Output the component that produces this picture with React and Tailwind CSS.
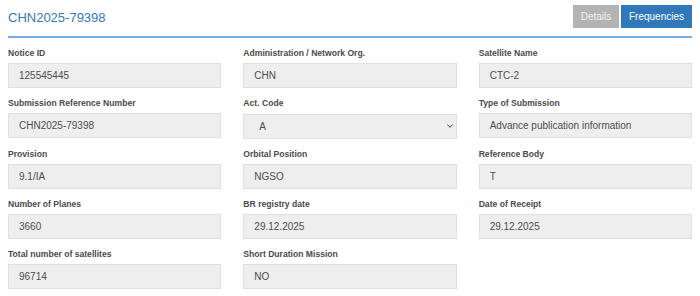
import { ChevronDown } from "lucide-react";

const fields = [
  { label: "Notice ID", value: "125545445" },
  { label: "Administration / Network Org.", value: "CHN" },
  { label: "Satellite Name", value: "CTC-2" },
  { label: "Submission Reference Number", value: "CHN2025-79398" },
  { label: "Act. Code", value: "A", select: true },
  { label: "Type of Submission", value: "Advance publication information" },
  { label: "Provision", value: "9.1/IA" },
  { label: "Orbital Position", value: "NGSO" },
  { label: "Reference Body", value: "T" },
  { label: "Number of Planes", value: "3660" },
  { label: "BR registry date", value: "29.12.2025" },
  { label: "Date of Receipt", value: "29.12.2025" },
  { label: "Total number of satellites", value: "96714" },
  { label: "Short Duration Mission", value: "NO" },
];

function Field({ field }) {
  return (
    <div className="flex flex-col">
      <label className="h-[12px] leading-[12px] text-[8.6px] font-bold text-[#4a4a4a] mb-[4px] whitespace-nowrap">
        {field.label}
      </label>
      {field.select ? (
        <div className="relative">
          <select
            defaultValue={field.value}
            className="appearance-none w-full h-[25px] bg-[#eeeeee] border border-[#e0e0e0] pl-[15px] text-[10px] text-[#4d4d4d] outline-none"
          >
            <option value="A">A</option>
          </select>
          <ChevronDown
            size={10}
            strokeWidth={2.5}
            className="absolute right-[2px] top-[8px] text-[#666] pointer-events-none"
          />
        </div>
      ) : (
        <div className="h-[25px] flex items-center bg-[#eeeeee] border border-[#e0e0e0] pl-[10px] text-[10px] text-[#4d4d4d]">
          {field.value}
        </div>
      )}
    </div>
  );
}

export default function App() {
  return (
    <div className="w-[700px] h-[296px] bg-white px-[8px] font-['Liberation_Sans',Arial,sans-serif]">
      {/* Header */}
      <div className="flex items-center justify-between pt-[5px] pb-[8px] border-b-2 border-[#7aaee2]">
        <h2 className="text-[13px] leading-[20px] text-[#3479bd] mt-[2px]">CHN2025-79398</h2>
        <div className="flex gap-[2px]">
          <button className="h-[23px] w-[46px] bg-[#b3b3b3] text-[#f2f2f2] text-[10px]">Details</button>
          <button className="h-[23px] w-[71px] bg-[#2f79bb] text-white text-[10px]">Frequencies</button>
        </div>
      </div>

      {/* Form */}
      <div className="grid grid-cols-3 gap-x-[22px] gap-y-[9px] pt-[9px]">
        {fields.map((f) => (
          <Field key={f.label} field={f} />
        ))}
      </div>
    </div>
  );
}
